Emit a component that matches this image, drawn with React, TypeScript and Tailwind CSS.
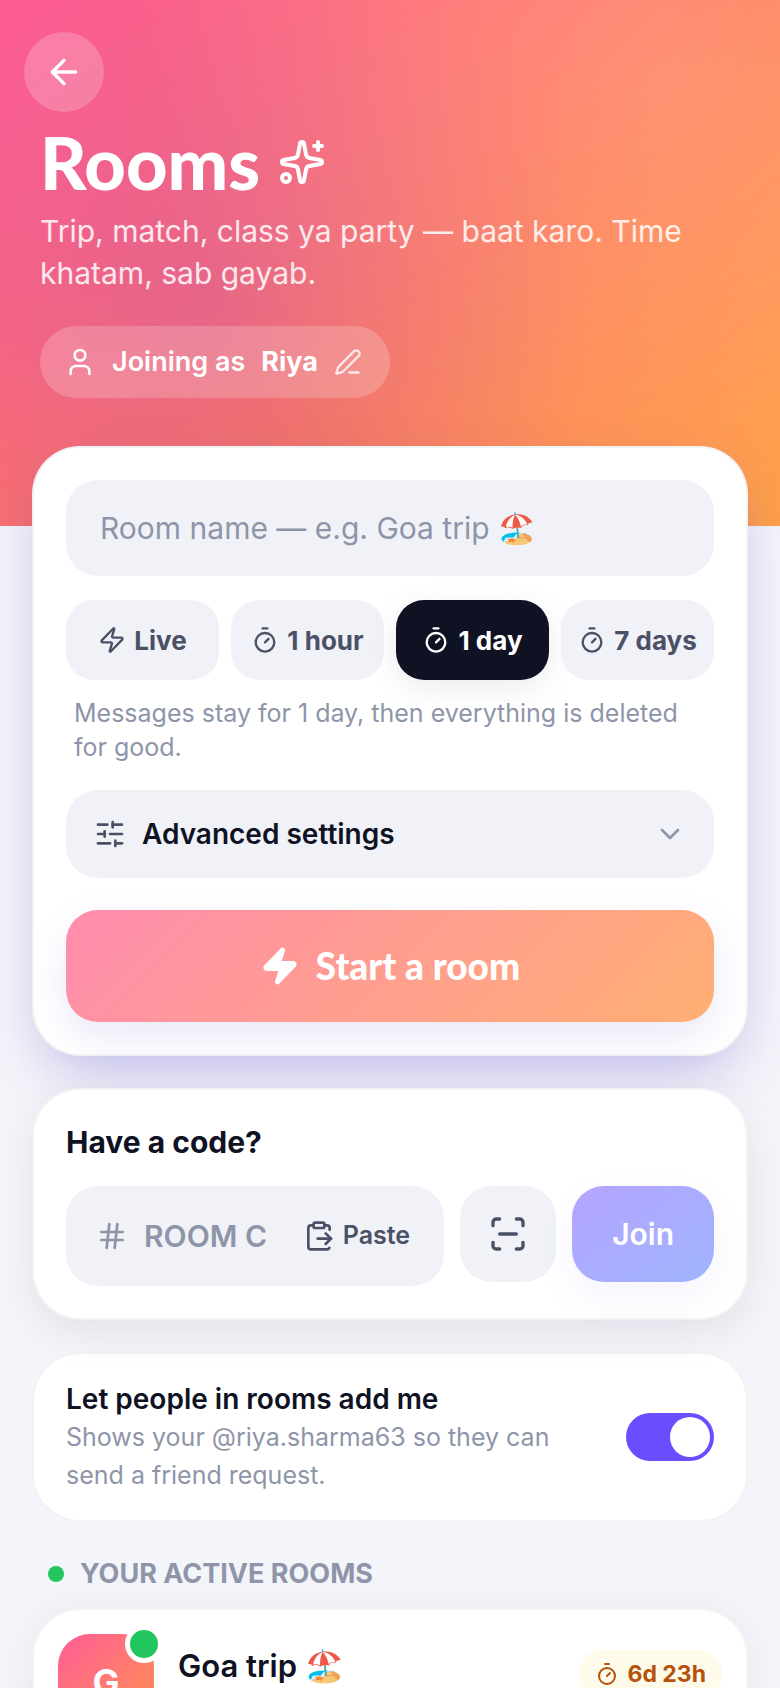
import { useState } from 'react';
import type { ReactNode } from 'react';
import {
  ArrowLeft,
  ChevronDown,
  ClipboardPaste,
  Hash,
  PenLine,
  ScanLine,
  SlidersHorizontal,
  Sparkles,
  Timer,
  User,
  Zap,
} from 'lucide-react';

type Duration = 'live' | 'hour' | 'day' | 'week';

type Room = {
  id: number;
  name: string;
  initial: string;
  timeLeft: string;
};

const durations: { id: Duration; label: string; hint: string }[] = [
  { id: 'live', label: 'Live', hint: 'Messages vanish when everyone leaves.' },
  { id: 'hour', label: '1 hour', hint: 'Messages stay for 1 hour, then everything is deleted for good.' },
  { id: 'day', label: '1 day', hint: 'Messages stay for 1 day, then everything is deleted for good.' },
  { id: 'week', label: '7 days', hint: 'Messages stay for 7 days, then everything is deleted for good.' },
];

const rooms: Room[] = [{ id: 1, name: 'Goa trip 🏖️', initial: 'G', timeLeft: '6d 23h' }];

function Card({ className, children }: { className: string; children: ReactNode }) {
  return <section className={`rounded-[48px] border-2 border-[#0f1222]/5 bg-white ${className}`}>{children}</section>;
}

function Header({ name }: { name: string }) {
  return (
    <header className="bg-[radial-gradient(circle_at_85%_15%,rgba(255,255,255,0.17),transparent_65%),radial-gradient(circle_at_26%_58%,rgba(130,50,255,0.2),transparent_60%),linear-gradient(135deg,#ff5c93_0%,#ff7a59_55%,#ff9f43_100%)] px-6 pt-8 pb-32 text-white">
      <button
        type="button"
        aria-label="Back"
        className="flex size-20 items-center justify-center rounded-full bg-white/20"
      >
        <ArrowLeft className="size-10" />
      </button>
      <div className="px-4 pt-[14px]">
        <h1 className="flex items-center gap-[18px] font-['Lato','Inter',sans-serif] text-[72px] leading-[72px] font-black">
          Rooms
          <Sparkles className="size-12" />
        </h1>
        <p className="mt-3 text-[30px] leading-[42px] text-white/85">
          Trip, match, class ya party — baat karo. Time khatam, sab gayab.
        </p>
        <button
          type="button"
          className="mt-8 flex h-[72px] items-center gap-4 rounded-full bg-white/20 pr-7 pl-6 text-[27px] font-semibold"
        >
          <User className="size-8" />
          <span>Joining as</span>
          <span className="font-bold">{name}</span>
          <PenLine className="size-7 opacity-80" />
        </button>
      </div>
    </header>
  );
}

function CreateRoomCard() {
  const [roomName, setRoomName] = useState('');
  const [duration, setDuration] = useState<Duration>('day');
  const selected = durations.find((d) => d.id === duration);

  return (
    <Card className="relative p-8 shadow-[0_24px_60px_-12px_rgba(88,70,200,0.34)]">
      <input
        type="text"
        aria-label="Room name"
        placeholder="Room name — e.g. Goa trip 🏖️"
        value={roomName}
        onChange={(e) => setRoomName(e.target.value)}
        className="h-24 w-full rounded-[32px] bg-[#f0f2f8] px-[34px] text-[30px] outline-none placeholder:text-[#8e95a9]"
      />
      <div className="mt-6 grid grid-cols-4 gap-3">
        {durations.map(({ id, label }) => {
          const Icon = id === 'live' ? Zap : Timer;
          return (
            <button
              key={id}
              type="button"
              aria-pressed={id === duration}
              onClick={() => setDuration(id)}
              className={`flex h-20 items-center justify-center gap-2 rounded-[28px] text-[26px] font-bold whitespace-nowrap ${
                id === duration
                  ? 'bg-[#0f1222] text-white shadow-[0_8px_32px_rgba(15,18,34,0.08)]'
                  : 'bg-[#f0f2f8] text-[#4a5166]'
              }`}
            >
              <Icon className="size-7 shrink-0" />
              {label}
            </button>
          );
        })}
      </div>
      <p className="mt-4 px-2 text-[25px] leading-[34px] text-[#8e95a9]">{selected?.hint}</p>
      <button
        type="button"
        aria-expanded="false"
        className="mt-[26px] flex h-[88px] w-full items-center gap-4 rounded-[32px] bg-[#f0f2f8] px-7 text-[28px] font-semibold"
      >
        <SlidersHorizontal className="size-8 text-[#4a5166]" />
        Advanced settings
        <ChevronDown className="ml-auto size-8 text-[#8e95a9]" />
      </button>
      <button
        type="button"
        className="mt-8 flex h-28 w-full items-center justify-center gap-4 rounded-[32px] bg-[linear-gradient(135deg,#ff8cae,#ff9c92_45%,#ffaf73)] font-['Lato','Inter',sans-serif] text-[37px] font-black text-white shadow-[0_16px_40px_rgba(88,70,200,0.12)]"
      >
        <Zap className="size-10 fill-current" />
        Start a room
      </button>
    </Card>
  );
}

function JoinRoomCard() {
  const [code, setCode] = useState('');

  return (
    <Card className="relative p-8 shadow-[0_12px_40px_rgba(15,18,34,0.08)]">
      <h2 className="text-[30px] leading-[40px] font-bold">Have a code?</h2>
      <div className="mt-6 flex items-start gap-4">
        <div className="flex h-[100px] min-w-0 flex-1 items-center rounded-[32px] bg-[#f0f2f8] pr-[34px] pl-[30px]">
          <Hash className="size-8 shrink-0 text-[#8e95a9]" />
          <input
            type="text"
            aria-label="Room code"
            placeholder="ROOM CODE"
            value={code}
            onChange={(e) => setCode(e.target.value.toUpperCase())}
            className="ml-4 w-full min-w-0 flex-1 text-[30px] font-semibold outline-none placeholder:text-[#8e95a9]"
          />
          <button type="button" className="ml-9 flex items-center gap-2 text-[25px] font-semibold text-[#4a5166]">
            <ClipboardPaste className="size-8 shrink-0" />
            Paste
          </button>
        </div>
        <button
          type="button"
          aria-label="Scan code"
          className="flex size-24 shrink-0 items-center justify-center rounded-[32px] bg-[#f0f2f8] text-[#4a5166]"
        >
          <ScanLine className="size-10" />
        </button>
        <button
          type="button"
          className="h-24 shrink-0 rounded-[32px] bg-linear-to-br from-[#b4a4ff] to-[#9fb4ff] px-10 text-[30px] font-semibold text-white shadow-[0_16px_40px_rgba(88,70,200,0.06)]"
        >
          Join
        </button>
      </div>
    </Card>
  );
}

function AddMeCard({ handle }: { handle: string }) {
  const [enabled, setEnabled] = useState(true);

  return (
    <Card className="px-8 py-[26px]">
      <div className="flex items-center gap-12">
        <label htmlFor="allow-add" className="flex-1">
          <span className="block text-[28px] leading-[38px] font-semibold">Let people in rooms add me</span>
          <span className="block text-[25px] leading-[38px] text-[#8e95a9]">
            {`Shows your ${handle} so they can send a friend request.`}
          </span>
        </label>
        <input
          id="allow-add"
          type="checkbox"
          role="switch"
          checked={enabled}
          onChange={(e) => setEnabled(e.target.checked)}
          className="h-12 w-[88px] shrink-0 appearance-none rounded-full bg-[#d5d9e5] p-1 before:block before:size-10 before:rounded-full before:bg-white checked:bg-[#6a4dff] checked:before:ml-auto"
        />
      </div>
    </Card>
  );
}

function RoomCard({ room }: { room: Room }) {
  return (
    <Card className="p-6 shadow-[0_4px_40px_rgba(15,18,34,0.06)]">
      <div className="flex items-start gap-6">
        <div className="relative flex size-24 shrink-0 items-center justify-center rounded-[32px] bg-linear-to-br from-[#ff5c93] to-[#ff8f45] text-[36px] font-bold text-white">
          {room.initial}
          <span className="absolute -top-[9px] -right-[9px] size-[38px] rounded-full border-5 border-white bg-[#22c55e]" />
        </div>
        <h3 className="flex-1 pt-3 text-[31px] leading-[40px] font-semibold">{room.name}</h3>
        <span className="mt-4 flex h-12 items-center gap-2 rounded-full bg-[#fffbeb] px-4 text-[23px] font-bold text-[#b45309]">
          <Timer className="size-6" />
          {room.timeLeft}
        </span>
      </div>
    </Card>
  );
}

export default function App() {
  return (
    <div className="h-screen overflow-hidden bg-[#f4f5fa] font-['Inter',sans-serif] text-[#0f1222]">
      <Header name="Riya" />
      <main className="-mt-20 flex flex-col gap-8 px-8">
        <CreateRoomCard />
        <JoinRoomCard />
        <AddMeCard handle="@riya.sharma63" />
        <div>
          <h2 className="mb-[14px] flex items-center gap-4 px-4 text-[27px] leading-[40px] font-bold text-[#8e95a9] uppercase">
            <span className="size-4 rounded-full bg-[#22c55e]" />
            Your active rooms
          </h2>
          {rooms.map((room) => (
            <RoomCard key={room.id} room={room} />
          ))}
        </div>
      </main>
    </div>
  );
}
